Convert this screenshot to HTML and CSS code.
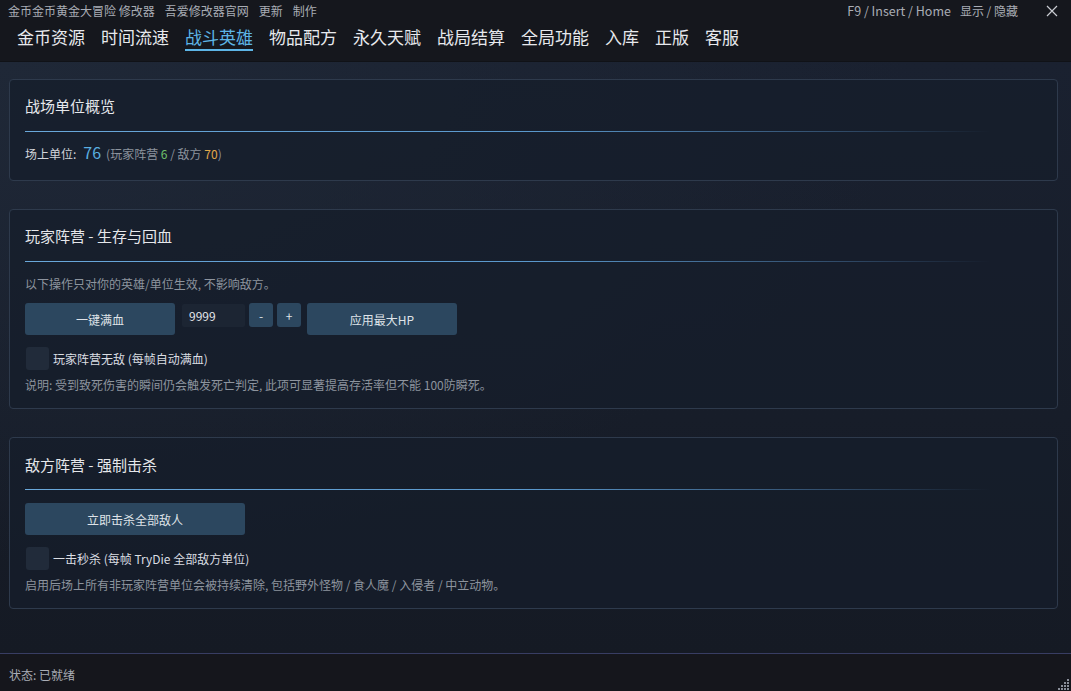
FILE: index.html
```html
<!DOCTYPE html>
<html lang="zh-CN">
<head>
<meta charset="utf-8">
<title>金币金币黄金大冒险 修改器</title>
<link rel="stylesheet" href="styles.css">
</head>
<body>
<div class="app">
  <header class="header">
    <div class="topbar">
      <div class="top-left">
        <span>金币金币黄金大冒险 修改器</span>
        <span>吾爱修改器官网</span>
        <span>更新</span>
        <span>制作</span>
      </div>
      <div class="top-right">
        <span class="hotkey">F9 / Insert / Home</span>
        <span>显示 / 隐藏</span>
        <span class="close">
          <svg width="12" height="12" viewBox="0 0 12 12"><path d="M1 1 L11 11 M11 1 L1 11" stroke="#c9ccd2" stroke-width="1.2" fill="none"/></svg>
        </span>
      </div>
    </div>
    <nav class="tabs">
      <span class="tab">金币资源</span>
      <span class="tab">时间流速</span>
      <span class="tab active">战斗英雄</span>
      <span class="tab">物品配方</span>
      <span class="tab">永久天赋</span>
      <span class="tab">战局结算</span>
      <span class="tab">全局功能</span>
      <span class="tab">入库</span>
      <span class="tab">正版</span>
      <span class="tab">客服</span>
    </nav>
  </header>

  <main class="main">
    <section class="card card-overview">
      <h2 class="card-title">战场单位概览</h2>
      <div class="divider"></div>
      <div class="stat-row">
        <span class="stat-label">场上单位:</span>
        <span class="stat-total">76</span>
        <span class="stat-detail">(玩家阵营 <span class="green">6</span> / 敌方 <span class="orange">70</span>)</span>
      </div>
    </section>

    <section class="card card-player">
      <h2 class="card-title">玩家阵营 - 生存与回血</h2>
      <div class="divider"></div>
      <p class="desc desc-top">以下操作只对你的英雄/单位生效, 不影响敌方。</p>
      <div class="controls">
        <button class="btn btn-wide">一键满血</button>
        <div class="input">9999</div>
        <button class="btn btn-small">-</button>
        <button class="btn btn-small">+</button>
        <button class="btn btn-wide">应用最大HP</button>
      </div>
      <label class="check-row">
        <span class="checkbox"></span>
        <span class="check-label">玩家阵营无敌 (每帧自动满血)</span>
      </label>
      <p class="desc">说明: 受到致死伤害的瞬间仍会触发死亡判定, 此项可显著提高存活率但不能 100防瞬死。</p>
    </section>

    <section class="card card-enemy">
      <h2 class="card-title">敌方阵营 - 强制击杀</h2>
      <div class="divider"></div>
      <div class="controls">
        <button class="btn btn-kill">立即击杀全部敌人</button>
      </div>
      <label class="check-row">
        <span class="checkbox"></span>
        <span class="check-label">一击秒杀 (每帧 TryDie 全部敌方单位)</span>
      </label>
      <p class="desc">启用后场上所有非玩家阵营单位会被持续清除, 包括野外怪物 / 食人魔 / 入侵者 / 中立动物。</p>
    </section>
  </main>

  <footer class="status">
    <span>状态: 已就绪</span>
    <span class="grip">
      <svg width="12" height="12" viewBox="0 0 12 12" fill="#8a8e99">
        <rect x="9" y="1" width="2" height="2"/>
        <rect x="6" y="4" width="2" height="2"/><rect x="9" y="4" width="2" height="2"/>
        <rect x="3" y="7" width="2" height="2"/><rect x="6" y="7" width="2" height="2"/><rect x="9" y="7" width="2" height="2"/>
        <rect x="0" y="10" width="2" height="2"/><rect x="3" y="10" width="2" height="2"/><rect x="6" y="10" width="2" height="2"/><rect x="9" y="10" width="2" height="2"/>
      </svg>
    </span>
  </footer>
</div>
</body>
</html>
```

FILE: styles.css
```css
* { box-sizing: border-box; }

html, body {
  margin: 0;
  padding: 0;
  height: 100%;
}

body {
  font-family: "Noto Sans CJK SC", "Noto Sans", "Liberation Sans", sans-serif;
  background: #16181e;
  color: #dfe2e7;
  overflow: hidden;
}

.app {
  display: flex;
  flex-direction: column;
  width: 1071px;
  height: 691px;
}

/* header */
.header {
  background: #15171d;
  height: 62px;
  flex: none;
  border-bottom: 1px solid #101217;
}

.topbar {
  display: flex;
  justify-content: space-between;
  align-items: center;
  height: 21px;
  padding: 0 13px 0 8px;
  font-size: 12px;
  color: #a9adb5;
}

.top-left {
  display: flex;
  gap: 10px;
}

.top-right {
  display: flex;
  align-items: center;
  gap: 9px;
}

.hotkey {
  font-size: 12.5px;
}

.top-right .close {
  display: flex;
  margin-left: 19px;
}

.tabs {
  display: flex;
  gap: 16px;
  padding: 5px 0 0 17px;
}

.tab {
  font-size: 17px;
  line-height: 22px;
  color: #e7e9ed;
  padding-bottom: 1px;
  border-bottom: 2px solid transparent;
}

.tab.active {
  color: #5db5e6;
  border-bottom-color: #5db5e6;
}

/* main */
.main {
  flex: 1;
  padding: 17px 13px 0 9px;
  display: flex;
  flex-direction: column;
  gap: 28px;
  background:
    radial-gradient(ellipse at 0% 0%, #1f2837 0%, rgba(31,40,55,0) 60%),
    linear-gradient(180deg, #1a2130 0%, #171d29 60%, #151a24 100%);
}

.card {
  border: 1px solid #2e3a4c;
  border-radius: 4px;
  background: rgba(22, 30, 43, 0.75);
  padding: 16px 16px 13px 15px;
}

.card-overview {
  padding-bottom: 18px;
}

.card-title {
  margin: 0;
  font-size: 15px;
  line-height: 20px;
  font-weight: normal;
  color: #e5e7eb;
}

.divider {
  height: 1px;
  margin: 15px 0 12px 0;
  background: linear-gradient(90deg, #6aa8da 0%, #5a98cc 50%, rgba(80,130,180,0.45) 80%, rgba(60,100,140,0) 95%);
}

.card-overview .divider {
  margin-bottom: 10px;
}

.card-enemy .divider {
  margin-bottom: 13px;
}

.card-enemy .card-title {
  margin-top: 1px;
  margin-bottom: -1px;
}

.stat-row {
  display: flex;
  align-items: baseline;
  height: 20px;
  font-size: 12px;
  color: #d2d5db;
  line-height: 20px;
}

.stat-total {
  font-size: 16px;
  color: #5aaee0;
  margin: 0 5px 0 7px;
}

.stat-detail {
  color: #8c939d;
}

.green { color: #6fc06b; }
.orange { color: #e1a94b; }

.desc {
  margin: 0;
  font-size: 12px;
  line-height: 20px;
  color: #8d949e;
}

.desc-top {
  margin-bottom: 9px;
}

.controls {
  display: flex;
  align-items: flex-start;
  gap: 4px;
}

.btn {
  font-family: inherit;
  border: none;
  border-radius: 3px;
  background: #2c475f;
  color: #dfe3e8;
  font-size: 12px;
  padding: 0;
  cursor: pointer;
}

.btn-wide {
  width: 150px;
  height: 32px;
}

.btn-kill {
  width: 220px;
  height: 32px;
}

.btn-small {
  width: 24px;
  height: 24px;
}

.controls .btn-wide:first-child {
  margin-right: 3px;
}

.controls .btn-small + .btn-wide {
  margin-left: 2px;
}

.input {
  width: 63px;
  height: 23px;
  margin-top: 1px;
  background: #1c2533;
  border-radius: 2px;
  font-size: 12px;
  line-height: 23px;
  padding-left: 7px;
  color: #e1e4e9;
}

.check-row {
  display: flex;
  align-items: center;
  gap: 4px;
  margin-top: 12px;
  margin-left: 1px;
  height: 23px;
}

.checkbox {
  width: 23px;
  height: 23px;
  border-radius: 3px;
  background: #212b3a;
}

.check-label {
  font-size: 12px;
  color: #dadde2;
}

.check-row + .desc {
  margin-top: 5px;
}

/* footer */
.status {
  flex: none;
  height: 38px;
  border-top: 1px solid #383d63;
  background: #15161c;
  display: flex;
  justify-content: space-between;
  align-items: center;
  padding: 0 0 0 9px;
  font-size: 12px;
  color: #a9adb5;
  position: relative;
}

.status > span:first-child {
  margin-top: 3px;
}

.grip {
  position: absolute;
  right: 1px;
  bottom: 1px;
  display: flex;
}
```
